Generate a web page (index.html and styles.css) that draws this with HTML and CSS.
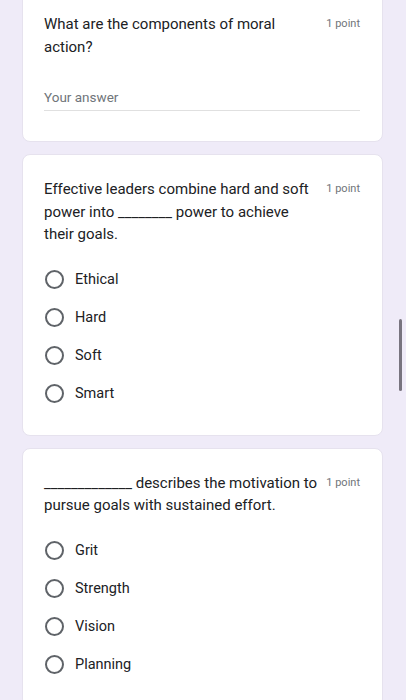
FILE: index.html
```html
<!DOCTYPE html>
<html>
<head>
<meta charset="utf-8">
<link rel="stylesheet" href="styles.css">
</head>
<body>
<div class="page">
  <div class="card card-first">
    <div class="q-head">
      <div class="q-text">What are the components of moral action?</div>
      <div class="q-points">1 point</div>
    </div>
    <div class="answer">Your answer</div>
  </div>

  <div class="card">
    <div class="q-head">
      <div class="q-text">Effective leaders combine hard and soft power into ________ power to achieve their goals.</div>
      <div class="q-points">1 point</div>
    </div>
    <div class="options">
      <div class="option"><span class="radio"></span><span class="label">Ethical</span></div>
      <div class="option"><span class="radio"></span><span class="label">Hard</span></div>
      <div class="option"><span class="radio"></span><span class="label">Soft</span></div>
      <div class="option"><span class="radio"></span><span class="label">Smart</span></div>
    </div>
  </div>

  <div class="card">
    <div class="q-head">
      <div class="q-text">_____________ describes the motivation to pursue goals with sustained effort.</div>
      <div class="q-points">1 point</div>
    </div>
    <div class="options">
      <div class="option"><span class="radio"></span><span class="label">Grit</span></div>
      <div class="option"><span class="radio"></span><span class="label">Strength</span></div>
      <div class="option"><span class="radio"></span><span class="label">Vision</span></div>
      <div class="option"><span class="radio"></span><span class="label">Planning</span></div>
    </div>
  </div>
</div>
<div class="scrollbar"></div>
</body>
</html>
```

FILE: styles.css
```css
html, body {
  margin: 0;
  padding: 0;
  height: 100%;
  overflow: hidden;
}
body {
  background: #efebf8;
  font-family: Roboto, "Noto Sans", Arial, sans-serif;
  color: #202124;
}
.page {
  display: flex;
  flex-direction: column;
  gap: 12px;
  padding: 0 23px 0 22px;
}
.card {
  background: #fff;
  border-radius: 8px;
  border: 1px solid #e6e2ee;
  padding: 23px 22px 22px 21px;
}
.card-first {
  margin-top: -11px;
  padding-bottom: 30px;
}
.q-head {
  display: flex;
  align-items: flex-start;
}
.q-text {
  flex: 1;
  font-size: 15px;
  line-height: 22.5px;
}
.q-points {
  margin-left: 8px;
  font-size: 11px;
  line-height: 22.5px;
  color: #70757a;
  white-space: nowrap;
}
.answer {
  margin-top: 29px;
  font-size: 13.5px;
  line-height: 20px;
  color: #70757a;
  padding-bottom: 3px;
  border-bottom: 1px solid #e0e0e0;
}
.options {
  margin-top: 15px;
  display: flex;
  flex-direction: column;
}
.option {
  display: flex;
  align-items: center;
  height: 38px;
}
.radio {
  width: 19px;
  height: 19px;
  box-sizing: border-box;
  border: 2px solid #5f6368;
  border-radius: 50%;
  margin-left: 1px;
  flex: none;
}
.label {
  margin-left: 11px;
  font-size: 14.5px;
  color: #202124;
}
.scrollbar {
  position: absolute;
  left: 399px;
  top: 319px;
  width: 3px;
  height: 72px;
  border-radius: 2px;
  background: #78747f;
}
```
